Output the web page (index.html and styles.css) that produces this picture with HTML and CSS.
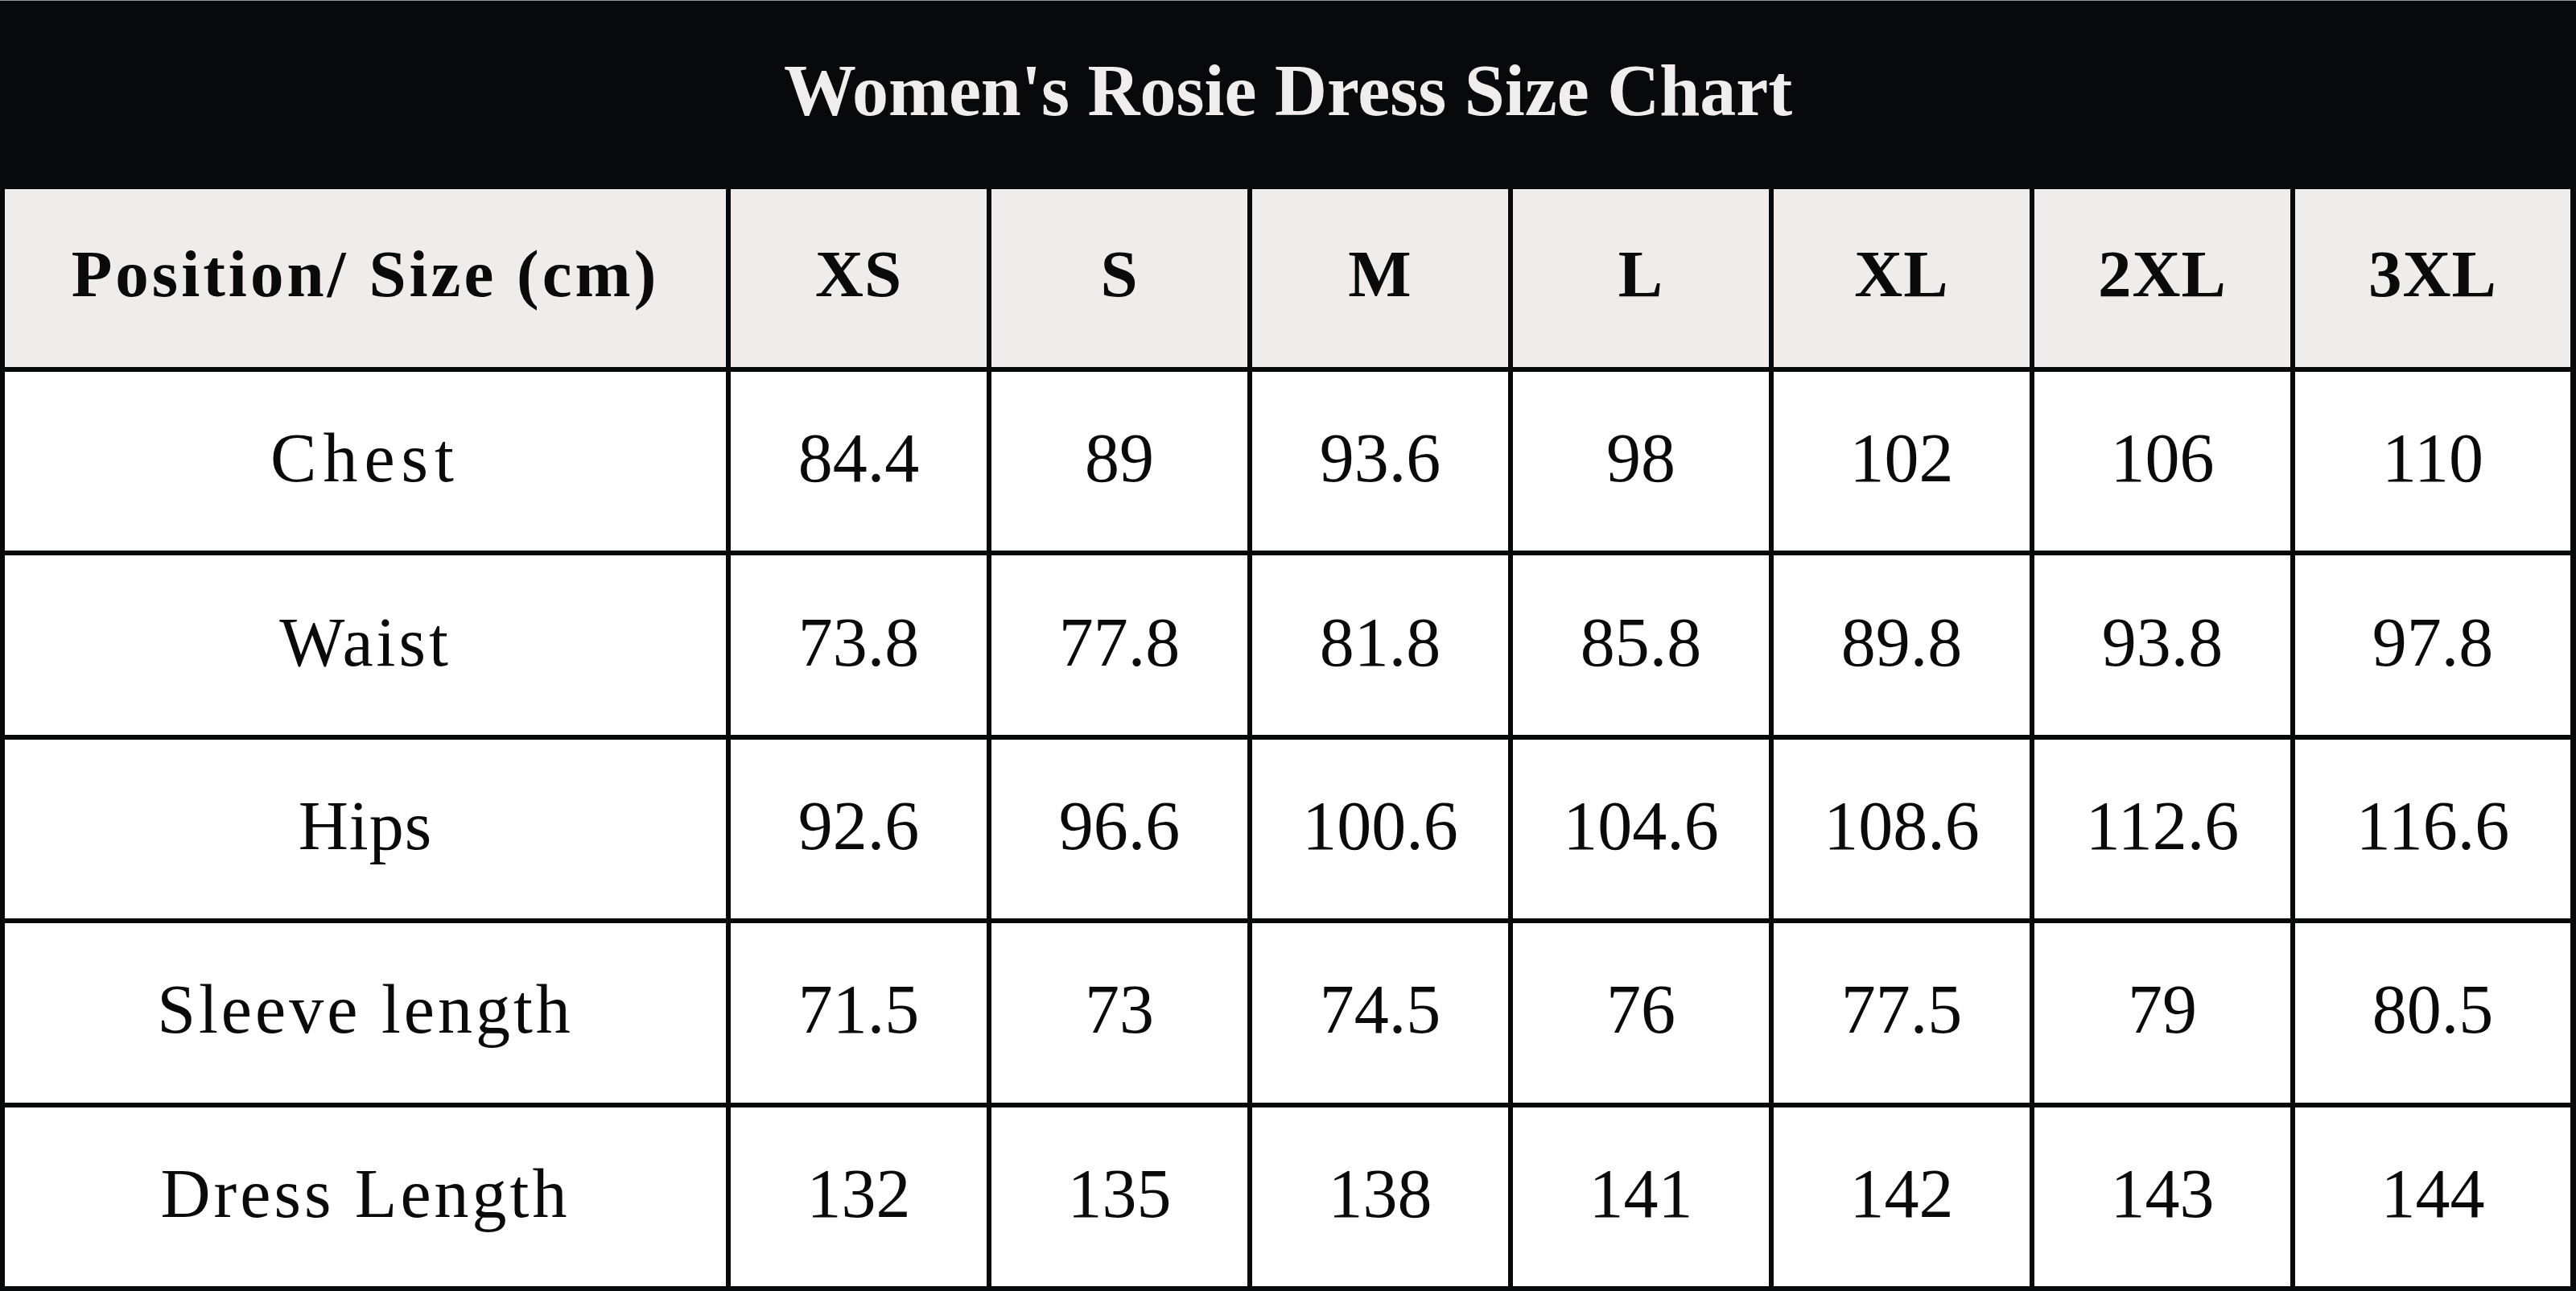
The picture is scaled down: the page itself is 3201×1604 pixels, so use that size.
FILE: index.html
```html
<!DOCTYPE html>
<html lang="en">
<head>
<meta charset="utf-8">
<title>Women's Rosie Dress Size Chart</title>
<link rel="stylesheet" href="styles.css">
</head>
<body>
<div class="chart">
  <div class="title">Women's Rosie Dress Size Chart</div>
  <div class="grid">
    <div class="cell head label-head">Position/ Size (cm)</div>
    <div class="cell head">XS</div>
    <div class="cell head">S</div>
    <div class="cell head">M</div>
    <div class="cell head">L</div>
    <div class="cell head">XL</div>
    <div class="cell head">2XL</div>
    <div class="cell head">3XL</div>

    <div class="cell label wide">Chest</div>
    <div class="cell">84.4</div>
    <div class="cell">89</div>
    <div class="cell">93.6</div>
    <div class="cell">98</div>
    <div class="cell">102</div>
    <div class="cell">106</div>
    <div class="cell">110</div>

    <div class="cell label">Waist</div>
    <div class="cell">73.8</div>
    <div class="cell">77.8</div>
    <div class="cell">81.8</div>
    <div class="cell">85.8</div>
    <div class="cell">89.8</div>
    <div class="cell">93.8</div>
    <div class="cell">97.8</div>

    <div class="cell label tight">Hips</div>
    <div class="cell">92.6</div>
    <div class="cell">96.6</div>
    <div class="cell">100.6</div>
    <div class="cell">104.6</div>
    <div class="cell">108.6</div>
    <div class="cell">112.6</div>
    <div class="cell">116.6</div>

    <div class="cell label">Sleeve length</div>
    <div class="cell">71.5</div>
    <div class="cell">73</div>
    <div class="cell">74.5</div>
    <div class="cell">76</div>
    <div class="cell">77.5</div>
    <div class="cell">79</div>
    <div class="cell">80.5</div>

    <div class="cell label">Dress Length</div>
    <div class="cell">132</div>
    <div class="cell">135</div>
    <div class="cell">138</div>
    <div class="cell">141</div>
    <div class="cell">142</div>
    <div class="cell">143</div>
    <div class="cell">144</div>
  </div>
</div>
</body>
</html>
```
FILE: styles.css
```css
html, body {
  margin: 0;
  padding: 0;
  background: #ffffff;
  overflow: hidden;
}

.chart {
  width: 3201px;
  height: 1604px;
  display: flex;
  flex-direction: column;
  font-family: "Liberation Serif", "Times New Roman", serif;
  color: #0a0a0a;
}

.title {
  flex: none;
  height: 235px;
  box-sizing: border-box;
  border-top: 1px solid #9a9a9a;
  background: #08090b;
  color: #f1eded;
  font-weight: 700;
  font-size: 90px;
  display: flex;
  align-items: center;
  justify-content: center;
  padding-bottom: 12px;
}

.grid {
  flex: 1;
  display: grid;
  grid-template-columns: 896px repeat(6, 318px) 342px;
  grid-template-rows: 221px repeat(5, 1fr);
  gap: 6px;
  padding: 0 7px 6px 6px;
  background: #08090b;
}

.cell {
  background: #ffffff;
  display: flex;
  align-items: center;
  justify-content: center;
  font-size: 86px;
  color: #0a0a0a;
  padding-bottom: 8px;
}

.cell.head {
  background: #f0ecec;
  font-weight: 700;
  font-size: 83px;
  letter-spacing: 1px;
  padding-bottom: 12px;
}

.cell.label-head {
  letter-spacing: 4px;
}

.cell.label {
  letter-spacing: 4px;
}

.cell.label.wide {
  letter-spacing: 8px;
}

.cell.label.tight {
  letter-spacing: 1px;
}
```
